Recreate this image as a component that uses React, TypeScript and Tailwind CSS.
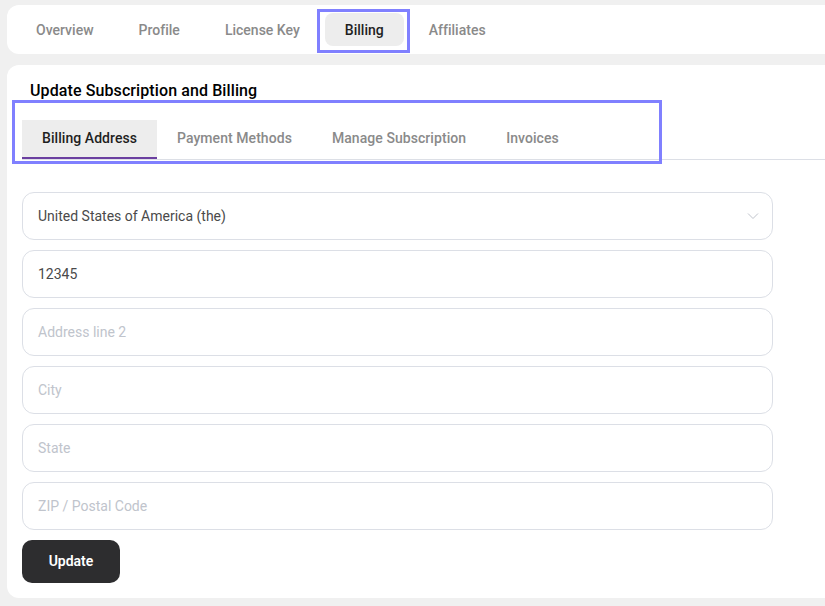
import React from "react";

const topTabs = ["Overview", "Profile", "License Key", "Billing", "Affiliates"];
const subTabs = ["Billing Address", "Payment Methods", "Manage Subscription", "Invoices"];

function Field({ value, placeholder, select }: { value?: string; placeholder?: string; select?: boolean }) {
  return (
    <div className="relative flex h-[48px] w-[751px] items-center rounded-[12px] border border-[#dcdfe6] bg-white pl-[15px] pr-[15px]">
      {value ? (
        <span className="text-[14px] text-[#4a4a4a]">{value}</span>
      ) : (
        <span className="text-[14px] text-[#c0c4cc]">{placeholder}</span>
      )}
      {select && (
        <svg className="ml-auto mr-[-2px]" width="12" height="8" viewBox="0 0 12 8" fill="none">
          <path d="M1 1.5L6 6.5L11 1.5" stroke="#c0c4cc" strokeWidth="1" />
        </svg>
      )}
    </div>
  );
}

export default function App() {
  return (
    <div
      className="relative h-[606px] w-[825px] overflow-hidden bg-[#f0f0f0] pl-[7px] pt-[5px]"
      style={{ fontFamily: "Roboto, 'Noto Sans', sans-serif" }}
    >
      {/* Top tabs card */}
      <div className="flex h-[49px] w-[840px] items-center gap-[5px] rounded-[12px] bg-white pl-[9px]">
        {topTabs.map((t) => (
          <div
            key={t}
            className={
              "flex h-[33px] items-center rounded-[8px] px-5 pt-[2px] text-[14px] font-medium tracking-[0.01px] " +
              (t === "Billing" ? "bg-[#ededed] text-[#1f1f1f]" : "text-[#8a8a8a]")
            }
          >
            {t}
          </div>
        ))}
      </div>

      {/* Main card */}
      <div className="mt-[11px] h-[533px] w-[840px] rounded-[12px] bg-white pl-[15px] pt-[14px]">
        <h2 className="h-[24px] pl-[8px] text-[16px] font-medium leading-[24px] tracking-[0.1px] text-black">
          Update Subscription and Billing
        </h2>
        <div className="mt-[17px] flex border-b border-[#dcdfe6]">
          {subTabs.map((t, i) => (
            <div
              key={t}
              className={
                "flex h-[39px] items-center px-5 text-[14px] font-medium tracking-[0.06px] " +
                (i === 0
                  ? "border-b-2 border-[#6b3fa0] bg-[#ededed] text-[#1f1f1f]"
                  : "border-b-2 border-transparent text-[#8a8a8a]")
              }
            >
              {t}
            </div>
          ))}
        </div>

        <div className="mt-[32px] flex flex-col gap-[10px]">
          <Field value="United States of America (the)" select />
          <Field value="12345" />
          <Field placeholder="Address line 2" />
          <Field placeholder="City" />
          <Field placeholder="State" />
          <Field placeholder="ZIP / Postal Code" />
        </div>

        <button className="mt-[10px] flex h-[43px] w-[98px] items-center justify-center rounded-[10px] bg-[#2d2d2f] text-[14px] font-semibold text-white">
          Update
        </button>
      </div>

      {/* Annotation outlines */}
      <div className="pointer-events-none absolute left-[317px] top-[9px] h-[44px] w-[93px] border-[3px] border-[#8080ff]" />
      <div className="pointer-events-none absolute left-[12px] top-[100px] h-[64px] w-[650px] border-[3px] border-[#8080ff]" />
    </div>
  );
}
